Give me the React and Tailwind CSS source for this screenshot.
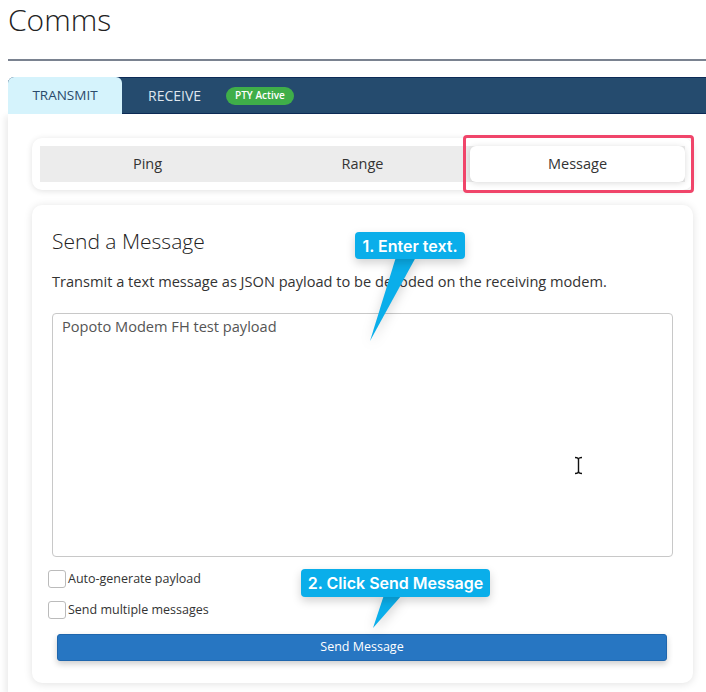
import React from 'react'

const ui = { fontFamily: '"Open Sans", "Noto Sans", sans-serif' }
const callout = { fontFamily: 'Inter, "Liberation Sans", sans-serif' }

function Callout({ box, tail, label }) {
  // box: [x, y, w, h]; tail: svg polygon points in page coords
  return (
    <>
      <svg className="absolute left-0 top-0 pointer-events-none" width="706" height="692" style={{ filter: 'drop-shadow(0 4px 6px rgba(0,0,0,0.18))' }}>
        <polygon points={tail} fill="#0aaeea" strokeLinejoin="round" />
      </svg>
      <div
        className="absolute rounded-[4px] bg-[#0aaeea] text-white font-semibold text-[16px] leading-none flex items-center justify-center shadow-[0_4px_10px_rgba(0,0,0,0.18)]"
        style={{ left: box[0], top: box[1], width: box[2], height: box[3], ...callout }}
      >
        {label}
      </div>
    </>
  )
}

function Checkbox({ label }) {
  return (
    <label className="flex items-center gap-[2px] text-[12.5px] text-[#333]">
      <span className="w-[18px] h-[18px] rounded-[3px] border border-[#bbb] bg-white" />
      {label}
    </label>
  )
}

export default function App() {
  return (
    <div className="relative w-[706px] h-[692px] overflow-hidden bg-white" style={ui}>
      <h1 className="pl-2 pt-[2px] text-[30px] font-light text-[#222] leading-[36px]">Comms</h1>
      <div className="ml-2 mt-[21px] h-[2px] bg-[#7a8290]" />

      <div className="ml-2 mt-[16px]">
        {/* Tab bar */}
        <div className="flex items-stretch h-[37px] bg-[#254b6e] border-y border-[#0d2b57] rounded-tl-[6px]">
          <div className="w-[114px] -my-px bg-[#d5f3fc] rounded-t-[6px] flex items-center justify-center text-[13.5px] text-[#2b4a6b]">
            TRANSMIT
          </div>
          <div className="pl-[26px] flex items-center text-[14px] text-[#dfe6ee]">RECEIVE</div>
          <div className="ml-[25px] flex items-center">
            <span className="bg-[#3fae49] text-white text-[10px] font-semibold rounded-full px-[9px] h-[18px] flex items-center">PTY Active</span>
          </div>
        </div>

        {/* Content panel */}
        <div className="bg-white shadow-[-3px_2px_6px_rgba(0,0,0,0.08)] pl-6 pr-[13px] pt-6 pb-[10px]">
          {/* Segmented control */}
          <div className="bg-white rounded-[10px] p-2 shadow-[0_1px_6px_rgba(0,0,0,0.12)]">
            <div className="flex h-[36px] bg-[#ececec] text-[14.5px] text-[#333]">
              <div className="flex-1 flex items-center justify-center">Ping</div>
              <div className="flex-1 flex items-center justify-center">Range</div>
              <div className="flex-1 relative flex items-center justify-center bg-white rounded-[6px] shadow-[0_1px_6px_rgba(0,0,0,0.15)]">
                Message
                <div className="absolute -left-[7px] -right-[9px] -top-[11px] -bottom-[11px] border-[3px] border-[#f0456a] rounded-[4px]" />
              </div>
            </div>
          </div>

          {/* Message card */}
          <div className="mt-[15px] bg-white rounded-[10px] shadow-[0_1px_8px_rgba(0,0,0,0.12)] px-[20px] pt-[24px] pb-[22px]">
            <h2 className="text-[21px] font-light text-[#222] leading-[24px]">Send a Message</h2>
            <p className="mt-[18px] text-[14.6px] text-[#333] leading-[20px]">
              Transmit a text message as JSON payload to be decoded on the receiving modem.
            </p>
            <div className="mt-[22px] h-[244px] border border-[#c8c8c8] rounded-[4px] px-[9px] pt-[2px] text-[14.6px] text-[#555]">
              Popoto Modem FH test payload
            </div>
            <div className="-ml-[4px] mt-[13px] flex flex-col gap-[12px]">
              <Checkbox label="Auto-generate payload" />
              <Checkbox label="Send multiple messages" />
            </div>
            <button className="mt-[14px] ml-[5px] w-[610px] h-[27px] rounded-[3px] bg-[#2776c2] border border-[#1f66ad] text-white text-[12.5px] shadow-[0_3px_6px_rgba(0,0,0,0.2)]">
              Send Message
            </button>
          </div>
        </div>
      </div>

      {/* I-beam cursor */}
      <svg className="absolute left-[573px] top-[456px]" width="11" height="19" viewBox="0 0 11 19">
        <path d="M2 1.5 Q5.5 1.5 5.5 3.5 Q5.5 1.5 9 1.5 M5.5 3.5 V15.5 M2 17.5 Q5.5 17.5 5.5 15.5 Q5.5 17.5 9 17.5" fill="none" stroke="#111" strokeWidth="1.4" />
      </svg>

      <Callout box={[355, 232, 110, 27]} tail="396,257 416,257 370,341" label="1. Enter text." />
      <Callout box={[301, 569, 189, 28]} tail="384,595 402,595 373,628" label="2. Click Send Message" />
    </div>
  )
}
